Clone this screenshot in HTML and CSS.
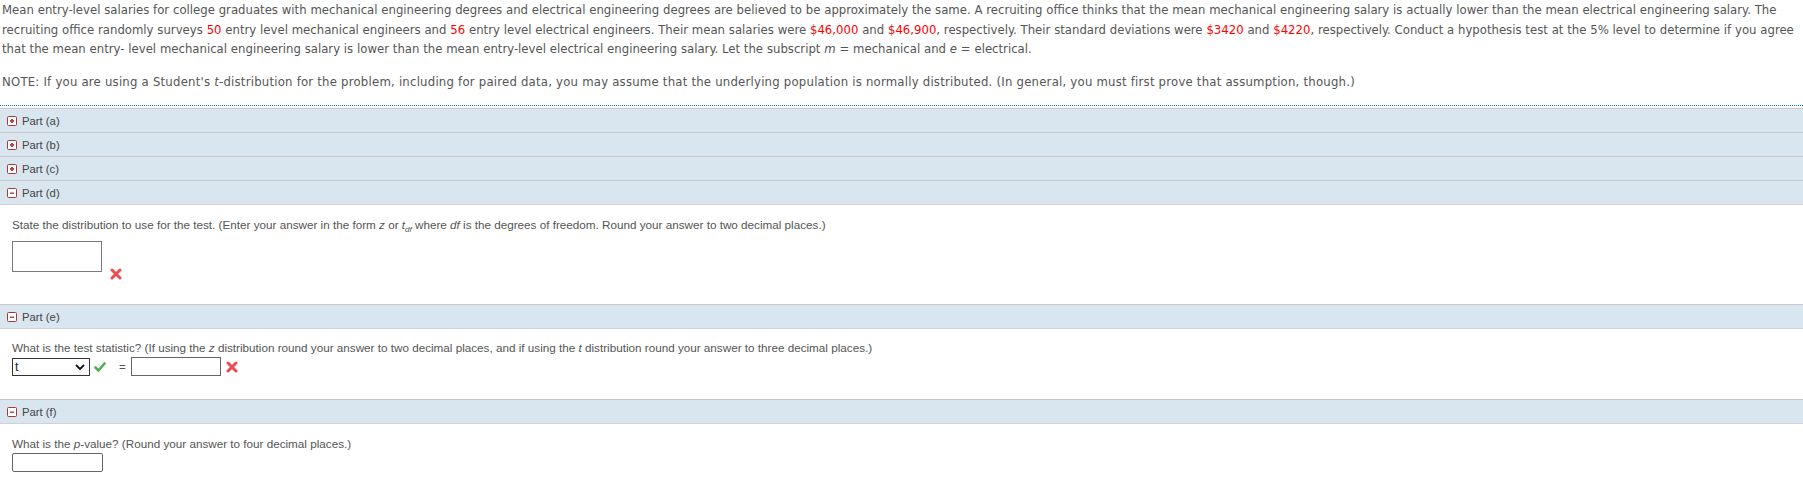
FILE: index.html
```html
<!DOCTYPE html>
<html>
<head>
<meta charset="utf-8">
<link rel="stylesheet" href="styles.css">
</head>
<body>
<div class="problem">
  <p class="stem">Mean entry-level salaries for college graduates with mechanical engineering degrees and electrical engineering degrees are believed to be approximately the same. A recruiting office thinks that the mean mechanical engineering salary is actually lower than the mean electrical engineering salary. The<br>recruiting office randomly surveys <span class="num">50</span> entry level mechanical engineers and <span class="num">56</span> entry level electrical engineers. Their mean salaries were <span class="num">$46,000</span> and <span class="num">$46,900</span>, respectively. Their standard deviations were <span class="num">$3420</span> and <span class="num">$4220</span>, respectively. Conduct a hypothesis test at the 5% level to determine if you agree<br>that the mean entry- level mechanical engineering salary is lower than the mean entry-level electrical engineering salary. Let the subscript <i>m</i> = mechanical and <i>e</i> = electrical.</p>
  <p class="note">NOTE: If you are using a Student's <i>t</i>-distribution for the problem, including for paired data, you may assume that the underlying population is normally distributed. (In general, you must first prove that assumption, though.)</p>
</div>
<div class="parts">
  <div class="part-head"><svg class="toggle" viewBox="0 0 10 10"><rect x="0.5" y="0.5" width="9" height="9" rx="1" fill="#fff" stroke="#a33a3a"/><rect x="4" y="3" width="2" height="4" fill="#b54a4a"/><rect x="3" y="4" width="4" height="2" fill="#b54a4a"/></svg><span>Part (a)</span></div>
  <div class="part-head"><svg class="toggle" viewBox="0 0 10 10"><rect x="0.5" y="0.5" width="9" height="9" rx="1" fill="#fff" stroke="#a33a3a"/><rect x="4" y="3" width="2" height="4" fill="#b54a4a"/><rect x="3" y="4" width="4" height="2" fill="#b54a4a"/></svg><span>Part (b)</span></div>
  <div class="part-head"><svg class="toggle" viewBox="0 0 10 10"><rect x="0.5" y="0.5" width="9" height="9" rx="1" fill="#fff" stroke="#a33a3a"/><rect x="4" y="3" width="2" height="4" fill="#b54a4a"/><rect x="3" y="4" width="4" height="2" fill="#b54a4a"/></svg><span>Part (c)</span></div>
  <div class="part-head"><svg class="toggle" viewBox="0 0 10 10"><rect x="0.5" y="0.5" width="9" height="9" rx="1" fill="#fff" stroke="#a33a3a"/><rect x="3" y="4.5" width="4" height="1.5" fill="#b54a4a"/></svg><span>Part (d)</span></div>
  <div class="part-body body-d">
    <div class="q">State the distribution to use for the test. (Enter your answer in the form <i>z</i> or <i>t</i><sub><i>df</i></sub> where <i>df</i> is the degrees of freedom. Round your answer to two decimal places.)</div>
    <div class="answer-row">
      <div class="box big"></div>
      <svg class="xmark low" viewBox="0 0 12 12"><path d="M2 2 L10 10 M10 2 L2 10" stroke="#ee4a4e" stroke-width="3" stroke-linecap="round"/></svg>
    </div>
  </div>
  <div class="part-head"><svg class="toggle" viewBox="0 0 10 10"><rect x="0.5" y="0.5" width="9" height="9" rx="1" fill="#fff" stroke="#a33a3a"/><rect x="3" y="4.5" width="4" height="1.5" fill="#b54a4a"/></svg><span>Part (e)</span></div>
  <div class="part-body body-e">
    <div class="q">What is the test statistic? (If using the <i>z</i> distribution round your answer to two decimal places, and if using the <i>t</i> distribution round your answer to three decimal places.)</div>
    <div class="answer-row mid">
      <div class="select"><span>t</span><svg class="chev" viewBox="0 0 10 6"><path d="M1 1 L5 5 L9 1" fill="none" stroke="#111" stroke-width="1.8"/></svg></div>
      <svg class="check" viewBox="0 0 12 12"><path d="M1.5 6.5 L4.5 9.5 L10.5 2.5" fill="none" stroke="#4caf50" stroke-width="2.6" stroke-linecap="round" stroke-linejoin="round"/></svg>
      <span class="eq">=</span>
      <div class="box small"></div>
      <svg class="xmark" viewBox="0 0 12 12"><path d="M2 2 L10 10 M10 2 L2 10" stroke="#ee4a4e" stroke-width="3" stroke-linecap="round"/></svg>
    </div>
  </div>
  <div class="part-head"><svg class="toggle" viewBox="0 0 10 10"><rect x="0.5" y="0.5" width="9" height="9" rx="1" fill="#fff" stroke="#a33a3a"/><rect x="3" y="4.5" width="4" height="1.5" fill="#b54a4a"/></svg><span>Part (f)</span></div>
  <div class="part-body body-f">
    <div class="q">What is the <i>p</i>-value? (Round your answer to four decimal places.)</div>
    <div class="answer-row">
      <div class="box pval"></div>
    </div>
  </div>
</div>
</body>
</html>
```

FILE: styles.css
```css
html, body {
  margin: 0;
  padding: 0;
  background: #fff;
}

.problem {
  padding: 0 0 14px 2px;
  font-family: "DejaVu Sans Condensed", "DejaVu Sans", sans-serif;
  font-size: 13px;
  line-height: 19.5px;
  color: #555;
  border-bottom: 1px dotted #1e78c8;
}

.problem p {
  margin: 0;
  white-space: nowrap;
}

.problem .stem {
  word-spacing: 0.1px;
}

.problem .note {
  margin-top: 13px;
  letter-spacing: 0.22px;
}

.num {
  color: #f00;
}

.parts {
  margin-top: 2px;
  font-family: "Liberation Sans", Arial, sans-serif;
  font-size: 11.7px;
  color: #444;
}

.part-head {
  display: flex;
  align-items: center;
  gap: 5px;
  height: 23px;
  padding-left: 7px;
  border-top: 1px solid #c9c9c9;
  background: #d9e5ef;
  color: #444;
  font-size: 11.3px;
}

.toggle {
  width: 10px;
  height: 10px;
  flex: none;
}

.part-body {
  padding-left: 12px;
  border-top: 1px solid #d0d0d0;
}

.q {
  line-height: 16px;
  color: #555;
}

.q sub {
  font-size: 8px;
  line-height: 0;
}

.body-d {
  padding-top: 12px;
  padding-bottom: 32px;
}

.body-d .answer-row {
  margin-top: 8px;
}

.body-e {
  padding-top: 11px;
  padding-bottom: 23px;
}

.body-e .answer-row {
  margin-top: 1px;
}

.body-f {
  padding-top: 12px;
}

.body-f .answer-row {
  margin-top: 1px;
}

.answer-row {
  display: flex;
  align-items: flex-end;
}

.answer-row.mid {
  align-items: center;
  height: 19px;
}

.box {
  box-sizing: border-box;
  border: 1px solid #7a7a7a;
  background: #fff;
}

.box.big {
  width: 90px;
  height: 31px;
}

.box.small {
  width: 90px;
  height: 19px;
  border-color: #666;
}

.box.pval {
  width: 91px;
  height: 19px;
  border-color: #666;
  border-radius: 2px;
}

.xmark {
  width: 12px;
  height: 12px;
  flex: none;
}

.xmark.low {
  margin-left: 8px;
  margin-bottom: -8px;
}

.body-e .xmark {
  margin-left: 5px;
}

.select {
  box-sizing: border-box;
  width: 78px;
  height: 18px;
  border: 1px solid #333;
  display: flex;
  align-items: center;
  justify-content: space-between;
  padding: 0 4px 0 2px;
  font-size: 12.5px;
  color: #222;
}

.chev {
  width: 10px;
  height: 6px;
}

.check {
  width: 12px;
  height: 12px;
  margin-left: 4px;
  flex: none;
}

.eq {
  margin-left: 13px;
  margin-right: 5px;
  color: #555;
  font-size: 11.5px;
}
```
